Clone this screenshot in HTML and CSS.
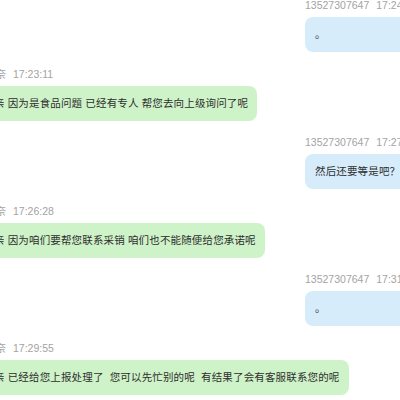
FILE: index.html
```html
<!DOCTYPE html>
<html>
<head>
<meta charset="utf-8">
<link rel="stylesheet" href="styles.css">
</head>
<body>
<div class="chat">
  <div class="msg right">
    <div class="meta">13527307647<span class="time">17:24:06</span></div>
    <div class="bubble blue wide">。</div>
  </div>
  <div class="msg left">
    <div class="meta">小奈<span class="time">17:23:11</span></div>
    <div class="bubble green">亲 因为是食品问题 已经有专人 帮您去向上级询问了呢</div>
  </div>
  <div class="msg right">
    <div class="meta">13527307647<span class="time">17:27:15</span></div>
    <div class="bubble blue wide">然后还要等是吧？</div>
  </div>
  <div class="msg left">
    <div class="meta">小奈<span class="time">17:26:28</span></div>
    <div class="bubble green">亲 因为咱们要帮您联系采销 咱们也不能随便给您承诺呢</div>
  </div>
  <div class="msg right">
    <div class="meta">13527307647<span class="time">17:31:02</span></div>
    <div class="bubble blue wide">。</div>
  </div>
  <div class="msg left">
    <div class="meta">小奈<span class="time">17:29:55</span></div>
    <div class="bubble green">亲 已经给您上报处理了&nbsp; 您可以先忙别的呢&nbsp; 有结果了会有客服联系您的呢</div>
  </div>
</div>
</body>
</html>
```
FILE: styles.css
```css
html, body {
  margin: 0;
  padding: 0;
  background: #ffffff;
  overflow: hidden;
  width: 400px;
  height: 400px;
}
.chat {
  display: flex;
  flex-direction: column;
  gap: 16.5px;
  font-family: "Liberation Sans", "Noto Sans CJK SC", sans-serif;
}
.msg {
  display: flex;
  flex-direction: column;
  align-items: flex-start;
  white-space: nowrap;
}
.msg.right {
  padding-left: 305px;
}
.msg.left {
  margin-left: -15px;
}
.meta {
  font-size: 10.5px;
  line-height: 10px;
  height: 10px;
  color: #a3a3a3;
  margin-bottom: 7px;
}
.time {
  margin-left: 7px;
}
.bubble {
  font-size: 10.5px;
  line-height: 17px;
  padding: 9px 9px;
  border-radius: 8px;
  color: #2e2e2e;
  letter-spacing: 0.15px;
}
.blue {
  background: #d6ecfb;
  padding-left: 10px;
}
.wide {
  min-width: 110px;
}
.green {
  background: #cff3c8;
}
```
